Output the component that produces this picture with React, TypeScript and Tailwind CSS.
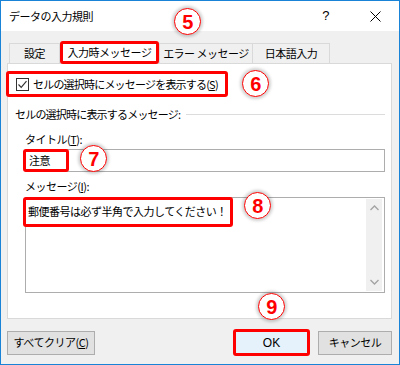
import React from "react";

const jp = "font-['Meiryo_UI','Noto_Sans_CJK_JP',sans-serif]";

function Marker({ n, className }: { n: string; className: string }) {
  return (
    <div
      className={`absolute w-[27px] h-[27px] rounded-full bg-white border-[1.5px] border-[#ff0000] shadow-[0_0_3px_2px_rgba(0,0,0,0.18)] flex items-center justify-center ${className}`}
    >
      <span className="font-['Liberation_Sans',Arial,sans-serif] font-bold text-[20px] leading-none text-[#ff0000]">
        {n}
      </span>
    </div>
  );
}

function Tab({ label, w, active }: { label: string; w: string; active?: boolean }) {
  if (active) {
    return (
      <div className={`${w} h-[23px] bg-white border-[3px] border-[#ff0000] rounded-[3px] flex items-center justify-center -mb-[1px] z-10`}>
        {label}
      </div>
    );
  }
  return (
    <div className={`${w} h-[20px] bg-[#f0f0f0] border border-b-0 border-[#d9d9d9] flex items-center justify-center`}>
      {label}
    </div>
  );
}

export default function App() {
  return (
    <div
      className={`relative w-[400px] h-[365px] bg-[#f0f0f0] border border-[#1883d7] text-[11px] tracking-[-0.5px] text-black whitespace-nowrap ${jp}`}
    >
      {/* title bar */}
      <div className="h-[30px] bg-white flex items-center pl-[8px]">
        <span>データの入力規則</span>
        <span className="ml-auto mr-[41px] text-[13px] font-['Liberation_Sans',sans-serif]">?</span>
        <svg width="11" height="11" viewBox="0 0 11 11" className="mr-[18px]">
          <path d="M0.5 0.5 L10.5 10.5 M10.5 0.5 L0.5 10.5" stroke="#000" strokeWidth="1" />
        </svg>
      </div>

      <div className="px-[6px]">
        {/* tabs */}
        <div className="h-[32px] flex items-end pl-[2px]">
          <Tab label="設定" w="w-[51px]" />
          <Tab label="入力時メッセージ" w="w-[99px]" active />
          <Tab label="エラー メッセージ" w="w-[94px]" />
          <div className="-ml-px">
            <Tab label="日本語入力" w="w-[78px]" />
          </div>
        </div>

        {/* panel */}
        <div className="w-[385px] h-[256px] bg-white border border-[#d9d9d9]">
          <div className="mt-[7px] -ml-[2px] w-[222px] h-[26px] border-[3px] border-[#ff0000] rounded-[3px] flex items-center pl-[7px]">
            <div className="w-[13px] h-[13px] border border-[#333] bg-white flex items-center justify-center">
              <svg width="11" height="11" viewBox="0 0 11 11">
                <path d="M1.5 5.5 L4.2 8.3 L9.5 2.2" fill="none" stroke="#333" strokeWidth="1.2" />
              </svg>
            </div>
            <span className="ml-[4px] tracking-[-0.8px]">
              セルの選択時にメッセージを表示する(<span className="underline">S</span>)
            </span>
          </div>

          <div className="mt-[9px] ml-[7px] mr-[6px] flex items-center">
            <span className="tracking-[-0.8px]">セルの選択時に表示するメッセージ:</span>
            <div className="flex-1 ml-[6px] h-px bg-[#dcdcdc]" />
          </div>

          <div className="ml-[17px] mr-[6px]">
            <div className="mt-[8px]">
              タイトル(<span className="underline">T</span>):
            </div>
            <div className="mt-[2px] h-[23px] border border-[#adadad] flex items-stretch">
              <div className="-ml-[3px] -my-px w-[46px] border-[3px] border-[#ff0000] rounded-[3px] flex items-center pl-[3px]">
                注意
              </div>
            </div>
            <div className="mt-[6px]">
              メッセージ(<span className="underline">I</span>):
            </div>
            <div className="mt-[2px] h-[96px] border border-[#adadad] flex">
              <div className="flex-1">
                <div className="-ml-[3px] -mt-px w-[210px] h-[30px] border-[3px] border-[#ff0000] rounded-[3px] flex items-center pl-[2px]">
                  郵便番号は必ず半角で入力してください！
                </div>
              </div>
              <div className="w-[16px] mr-[2px] my-px bg-[#f0f0f0] flex flex-col justify-between items-center py-[6px]">
                <svg width="9" height="6" viewBox="0 0 9 6">
                  <path d="M0.5 5 L4.5 1 L8.5 5" fill="none" stroke="#a3a3a3" strokeWidth="1.3" />
                </svg>
                <svg width="9" height="6" viewBox="0 0 9 6">
                  <path d="M0.5 1 L4.5 5 L8.5 1" fill="none" stroke="#a3a3a3" strokeWidth="1.3" />
                </svg>
              </div>
            </div>
          </div>
        </div>

        {/* buttons */}
        <div className="mt-[10px] flex items-center">
          <button className="w-[88px] h-[24px] bg-[#e1e1e1] border border-[#adadad]">
            すべてクリア(<span className="underline">C</span>)
          </button>
          <button className="ml-auto w-[77px] h-[27px] bg-[#e5f1fb] border-[3px] border-[#ff0000] rounded-[3px] text-[12px] font-['Liberation_Sans',sans-serif] tracking-normal">
            OK
          </button>
          <button className="ml-[8px] mr-[1px] w-[74px] h-[24px] bg-[#e1e1e1] border border-[#adadad]">
            キャンセル
          </button>
        </div>
      </div>

      {/* annotation markers */}
      <Marker n="5" className="left-[173px] top-[7px]" />
      <Marker n="6" className="left-[241px] top-[69px]" />
      <Marker n="7" className="left-[79px] top-[144px]" />
      <Marker n="8" className="left-[243px] top-[191px]" />
      <Marker n="9" className="left-[257px] top-[292px]" />
    </div>
  );
}
